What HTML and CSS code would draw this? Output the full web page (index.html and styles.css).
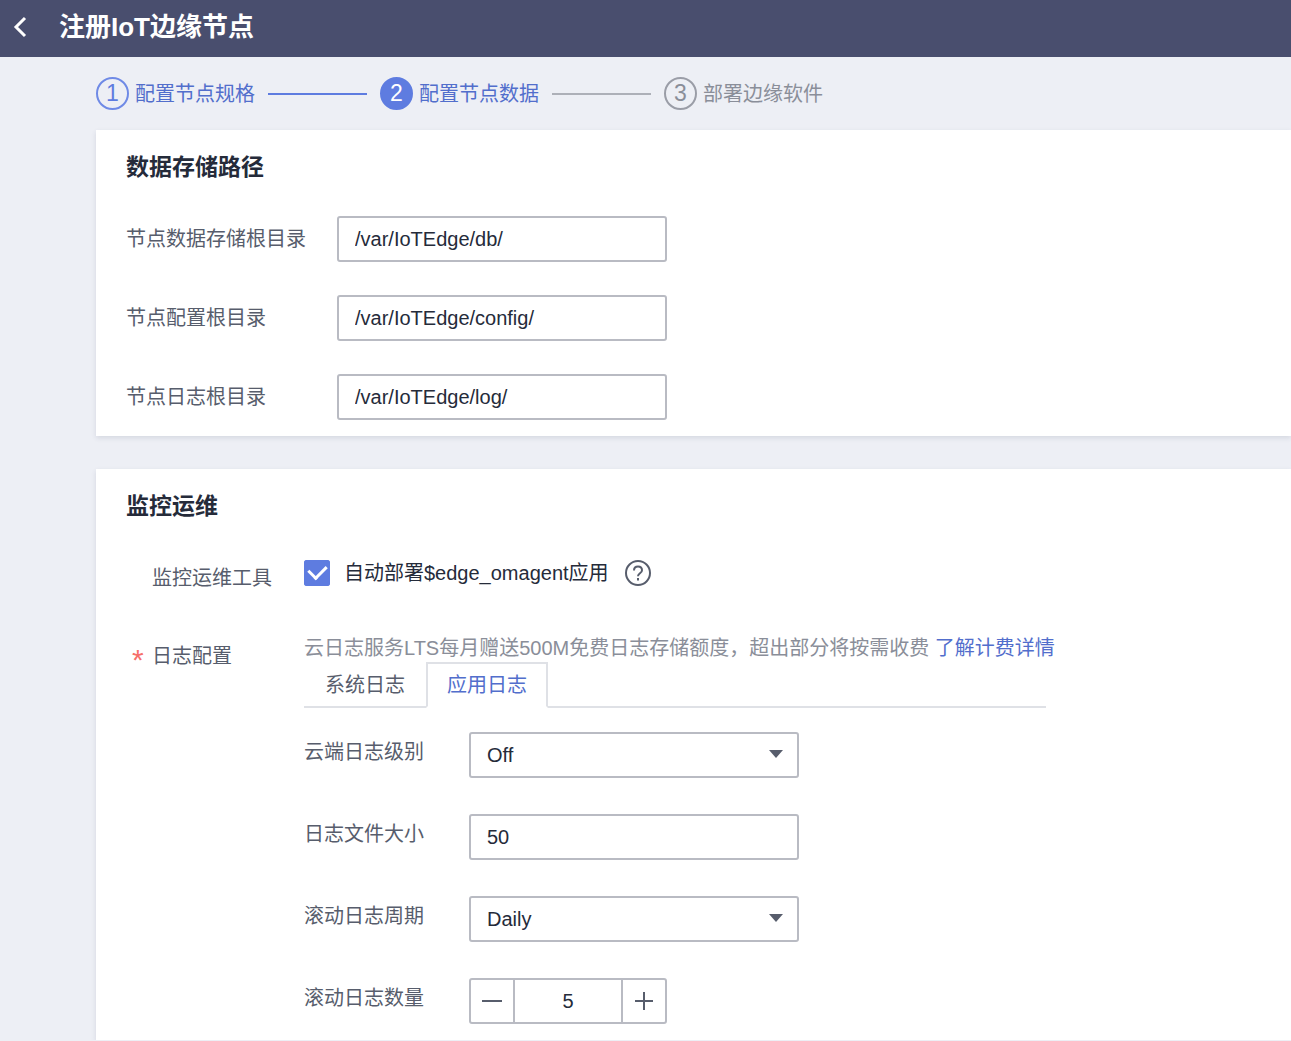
FILE: index.html
```html
<!DOCTYPE html>
<html lang="zh-CN">
<head>
  <meta charset="UTF-8">
  <meta name="viewport" content="width=device-width, initial-scale=1.0">
  <title>注册IoT边缘节点</title>
  <link rel="stylesheet" href="styles.css">
</head>
<body>
  <header class="topbar">
    <a class="back" href="#" aria-label="返回">
      <svg width="14" height="22" viewBox="0 0 14 22"><path d="M12 2 3 11l9 9" fill="none" stroke="currentColor" stroke-width="3"/></svg>
    </a>
    <h1>注册IoT边缘节点</h1>
  </header>

  <main>
    <ol class="steps">
      <li class="step done"><span class="num">1</span>配置节点规格</li>
      <li class="step current"><span class="num">2</span>配置节点数据</li>
      <li class="step"><span class="num">3</span>部署边缘软件</li>
    </ol>

    <!-- Storage paths -->
    <section class="card">
      <h2>数据存储路径</h2>
      <div class="path-list">
        <div class="path-row">
          <label for="dbPath">节点数据存储根目录</label>
          <input class="control" id="dbPath" type="text" value="/var/IoTEdge/db/">
        </div>
        <div class="path-row">
          <label for="configPath">节点配置根目录</label>
          <input class="control" id="configPath" type="text" value="/var/IoTEdge/config/">
        </div>
        <div class="path-row">
          <label for="logPath">节点日志根目录</label>
          <input class="control" id="logPath" type="text" value="/var/IoTEdge/log/">
        </div>
      </div>
    </section>

    <!-- Monitoring -->
    <section class="card">
      <h2>监控运维</h2>
      <div class="om-row">
        <span class="om-label">监控运维工具</span>
        <div class="om-tool">
          <input type="checkbox" id="omagent" checked>
          <label for="omagent">自动部署$edge_omagent应用</label>
          <button class="help" type="button" aria-label="帮助">
            <svg width="28" height="28" viewBox="0 0 28 28" fill="none" stroke="currentColor" stroke-width="2">
              <circle cx="14" cy="14" r="12"/>
              <path d="M10 11.500c0-2.400 1.700-4 4-4s4 1.500 4 3.700c0 1.800-1.200 2.500-2.300 3.300-1.100.8-1.700 1.300-1.700 2.700M14 19v2.400"/>
            </svg>
          </button>
        </div>
      </div>

      <div class="om-row">
        <span class="om-label required">日志配置</span>
        <div class="log-config">
          <p class="note">云日志服务LTS每月赠送500M免费日志存储额度，超出部分将按需收费 <a href="#">了解计费详情</a></p>
          <div class="tabs" role="tablist">
            <button class="tab" type="button" role="tab" aria-selected="false">系统日志</button>
            <button class="tab active" type="button" role="tab" aria-selected="true">应用日志</button>
          </div>
          <div class="log-fields">
            <div class="log-row">
              <label for="level">云端日志级别</label>
              <div class="select">
                <select class="control" id="level">
                  <option>Off</option>
                </select>
              </div>
            </div>
            <div class="log-row">
              <label for="size">日志文件大小</label>
              <input class="control" id="size" type="text" value="50">
            </div>
            <div class="log-row">
              <label for="period">滚动日志周期</label>
              <div class="select">
                <select class="control" id="period">
                  <option>Daily</option>
                </select>
              </div>
            </div>
            <div class="log-row">
              <label for="count">滚动日志数量</label>
              <div class="stepper">
                <button type="button" id="minus" aria-label="减少">
                  <svg width="20" height="20" viewBox="0 0 20 20"><path d="M0 10h20" stroke="currentColor" stroke-width="2"/></svg>
                </button>
                <input id="count" type="text" value="5">
                <button type="button" id="plus" aria-label="增加">
                  <svg width="20" height="20" viewBox="0 0 20 20"><path d="M1 10h18M10 1v18" stroke="currentColor" stroke-width="2"/></svg>
                </button>
              </div>
            </div>
          </div>
        </div>
      </div>
    </section>
  </main>

  <script>
    // Stepper buttons
    const count = document.getElementById("count");
    document.getElementById("minus").addEventListener("click", () => {
      count.value = Math.max(1, Number(count.value) - 1);
    });
    document.getElementById("plus").addEventListener("click", () => {
      count.value = Number(count.value) + 1;
    });

    // Log type tabs
    const tabs = document.querySelectorAll(".tab");
    tabs.forEach((tab) => {
      tab.addEventListener("click", () => {
        tabs.forEach((t) => {
          t.classList.toggle("active", t === tab);
          t.setAttribute("aria-selected", t === tab);
        });
      });
    });
  </script>
</body>
</html>
```
FILE: styles.css
```css
/* Global Styles */
* {
  box-sizing: border-box;
}
body {
  margin: 0;
  background: #edeff5;
  font-family: "Liberation Sans", "Noto Sans CJK SC", sans-serif;
  font-size: 20px;
  line-height: 28px;
  color: #575d6c;
}
input, select, button {
  font: inherit;
  color: inherit;
}
button {
  padding: 0;
  border: none;
  background: none;
  cursor: pointer;
}
svg {
  display: block;
}
a {
  color: #526ecc;
  text-decoration: none;
}
/* Header */
.topbar {
  display: flex;
  align-items: center;
  gap: 32px;
  height: 57px;
  padding: 0 13px 4px;
  background: #494e6e;
}
.topbar h1 {
  margin: 0;
  font-size: 26px;
  color: #fff;
}
.back {
  color: #fff;
}
main {
  padding-left: 96px;
}
/* Steps */
.steps {
  display: flex;
  align-items: center;
  height: 73px;
  margin: 0;
  padding: 0;
  list-style: none;
}
.step {
  display: flex;
  align-items: center;
  color: #8a8e99;
}
.step:not(:last-child)::after {
  content: "";
  width: 99px;
  height: 2px;
  margin: 0 13px;
  background: #adb0b8;
}
.num {
  width: 33px;
  height: 33px;
  margin-right: 6px;
  border: 2px solid #9a9da7;
  border-radius: 50%;
  font-size: 23px;
  text-align: center;
}
.step.done, .step.current {
  color: #526ecc;
}
.step.done .num {
  border-color: #6f8ae6;
  color: #5e7ce0;
}
.step.done::after {
  background: #5e7ce0;
}
.step.current .num {
  border-color: #5e7ce0;
  background: #5e7ce0;
  color: #fff;
}
/* Cards */
.card {
  margin-bottom: 33px;
  padding: 20px 30px 16px;
  background: #fff;
  box-shadow: 0 2px 5px rgba(40, 50, 80, 0.12);
}
.card:last-child {
  margin-bottom: 0;
}
.card h2 {
  margin: 0;
  font-size: 23px;
  line-height: 34px;
  color: #252b3a;
}
.control {
  display: block;
  width: 330px;
  height: 46px;
  padding: 0 16px;
  border: 2px solid #b9bbc3;
  border-radius: 3px;
  background: #fff;
  color: #252b3a;
}
.path-list {
  display: flex;
  flex-direction: column;
  gap: 33px;
  padding-top: 32px;
}
.path-row {
  display: flex;
  align-items: center;
}
.path-row label {
  width: 211px;
}
/* Monitoring rows */
.om-row {
  display: flex;
  align-items: flex-start;
  padding-top: 33px;
}
.om-row + .om-row {
  padding-top: 42px;
}
.om-label {
  position: relative;
  width: 178px;
  padding: 8px 0 0 26px;
}
.required::before {
  content: "*";
  position: absolute;
  left: 6px;
  top: 12px;
  font-size: 30px;
  color: #f66f6a;
}
.om-tool {
  display: flex;
  align-items: center;
  height: 34px;
  color: #252b3a;
}
.om-tool input {
  appearance: none;
  display: grid;
  place-items: center;
  width: 26px;
  height: 26px;
  margin: 0 14px 0 0;
  border-radius: 3px;
  box-shadow: inset 0 0 0 2px #5e7ce0;
}
.om-tool input:checked {
  background: #5e7ce0;
}
.om-tool input:checked::before {
  content: "";
  width: 14px;
  height: 9px;
  margin-bottom: 6px;
  border: solid #fff;
  border-width: 0 0 3px 3px;
  transform: rotate(-45deg);
}
.help {
  margin-left: 15px;
  color: #575d6c;
}
.log-config {
  max-width: 742px;
}
.note {
  margin: 0;
  color: #8a8e99;
  white-space: nowrap;
}
.tabs {
  display: flex;
  height: 46px;
  border-bottom: 2px solid #dfe1e6;
}
.tab {
  height: 46px;
  padding: 0 19px;
  border: 2px solid transparent;
}
.tab.active {
  border-color: #dfe1e6;
  border-bottom-color: #fff;
  background: #fff;
  color: #526ecc;
}
/* Log fields */
.log-fields {
  display: flex;
  flex-direction: column;
  gap: 36px;
  padding-top: 24px;
}
.log-row {
  display: flex;
}
.log-row label {
  width: 165px;
  padding-top: 6px;
}
.select {
  position: relative;
}
.select select {
  appearance: none;
}
.select::after {
  content: "";
  position: absolute;
  right: 16px;
  top: 18px;
  border: 7px solid transparent;
  border-top: 8px solid #575d6c;
  border-bottom: none;
  pointer-events: none;
}
.stepper {
  display: flex;
  width: 198px;
  height: 46px;
  border: 2px solid #b9bbc3;
  border-radius: 3px;
}
.stepper button {
  display: grid;
  place-items: center;
  width: 42px;
}
.stepper input {
  flex: 1;
  min-width: 0;
  border: solid #b9bbc3;
  border-width: 0 2px;
  color: #252b3a;
  text-align: center;
}
```
